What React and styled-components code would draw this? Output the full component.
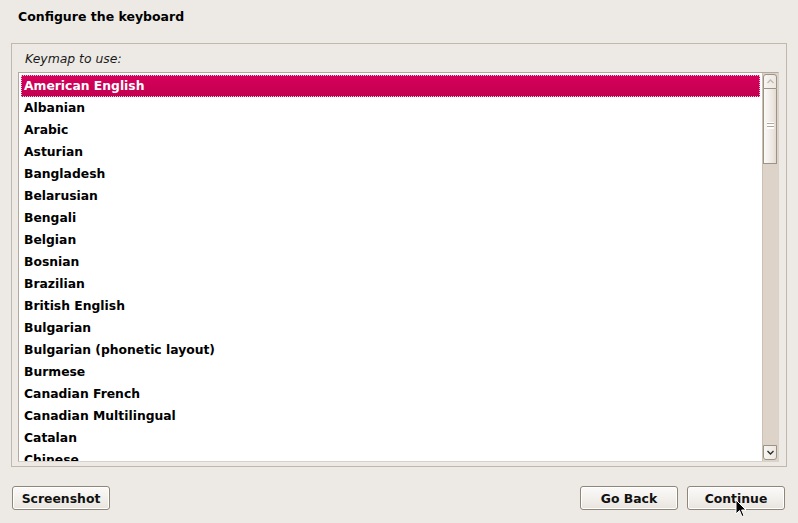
import React from 'react';
import styled, { createGlobalStyle } from 'styled-components';

const GlobalStyle = createGlobalStyle`
  html, body {
    margin: 0;
    padding: 0;
    background: #edeae5;
  }
  body {
    font-family: "DejaVu Sans", "Liberation Sans", sans-serif;
    color: #000;
  }
`;

const keymaps = [
  'American English',
  'Albanian',
  'Arabic',
  'Asturian',
  'Bangladesh',
  'Belarusian',
  'Bengali',
  'Belgian',
  'Bosnian',
  'Brazilian',
  'British English',
  'Bulgarian',
  'Bulgarian (phonetic layout)',
  'Burmese',
  'Canadian French',
  'Canadian Multilingual',
  'Catalan',
  'Chinese',
];

const Page = styled.div`
  position: relative;
  width: 798px;
  height: 523px;
  display: flex;
  flex-direction: column;
  background: #edeae5;
  overflow: hidden;
`;

const Header = styled.div`
  height: 43px;
  padding: 9px 0 0 18px;
  box-sizing: border-box;
  font-size: 12.5px;
  font-weight: bold;
`;

const Frame = styled.div`
  margin: 0 11px 0 11px;
  height: 424px;
  box-sizing: border-box;
  border: 1px solid #c0b8ab;
  padding: 4px 7px 4px 6px;
  display: flex;
  flex-direction: column;
`;

const Label = styled.div`
  font-size: 12.4px;
  font-style: italic;
  color: #1a1a1a;
  height: 24px;
  padding: 3px 0 0 7px;
  box-sizing: border-box;
`;

const ListBox = styled.div`
  flex: 1;
  display: flex;
  border: 1px solid #b2aa9e;
  border-right-color: #d8d2c9;
  border-bottom-color: #d8d2c9;
  background: #fff;
  overflow: hidden;
`;

const Rows = styled.div`
  flex: 1;
  padding: 2px 2px 0 2px;
  overflow: hidden;
`;

const Row = styled.div`
  height: 22px;
  line-height: 22px;
  padding-left: 3px;
  font-size: 12.35px;
  font-weight: bold;
  white-space: nowrap;
  box-sizing: border-box;
  color: ${p => (p.$selected ? '#fff' : '#000')};
  background: ${p => (p.$selected ? 'linear-gradient(#d7005b, #c10050)' : 'transparent')};
  outline: ${p => (p.$selected ? '1px dotted #f6c4d8' : 'none')};
  outline-offset: -1px;
`;

const ScrollBar = styled.div`
  width: 16px;
  background: #ddd3c8;
  border-left: 1px solid #c9c1b6;
  display: flex;
  flex-direction: column;
  padding: 1px 0;
  box-sizing: border-box;
`;

const Stepper = styled.div`
  height: 15px;
  margin: 0 1px 0 0;
  border: 1px solid #9d9385;
  border-radius: ${p => (p.$up ? '3px 3px 0 0' : '0 0 3px 3px')};
  background: linear-gradient(90deg, #f7f5f2, #ece7e2);
  display: flex;
  align-items: center;
  justify-content: center;
  box-sizing: border-box;
`;

const Thumb = styled.div`
  height: 75px;
  margin-right: 1px;
  border: 1px solid #9d9385;
  border-top: none;
  background: linear-gradient(90deg, #fbfaf9, #ede7e2 70%, #e3dbd3);
  display: flex;
  align-items: center;
  justify-content: center;
  box-sizing: border-box;
`;

const Grip = styled.div`
  width: 7px;
  height: 7px;
  margin-top: -2px;
  background: repeating-linear-gradient(#ffffff 0 1px, #b3a897 1px 2px, #ffffff 2px 3px);
`;

const Trough = styled.div`
  flex: 1;
`;

const Footer = styled.div`
  flex: 1;
  display: flex;
  align-items: flex-start;
  padding: 19px 13px 0 12px;
  gap: 9px;
`;

const Spacer = styled.div`
  flex: 1;
`;

const Button = styled.button`
  width: 98px;
  height: 24px;
  padding: 0;
  border: 1px solid #8f8677;
  border-radius: 3px;
  background: linear-gradient(#fbfaf9, #f1eeea 60%, #e8e3de);
  box-shadow: inset 0 0 0 1px #ffffff;
  font-family: "DejaVu Sans", "Liberation Sans", sans-serif;
  font-size: 12.4px;
  font-weight: bold;
  color: #111;
`;

const Pointer = styled.svg`
  position: absolute;
  left: 735px;
  top: 499px;
`;

const Arrow = ({ up }) => (
  <svg width="7" height="5" viewBox="0 0 7 5">
    <path
      d={up ? 'M0.5 4 L3.5 1 L6.5 4' : 'M0.5 1 L3.5 4 L6.5 1'}
      fill="none"
      stroke={up ? '#c2b9ad' : '#2a2a2a'}
      strokeWidth="1.3"
    />
  </svg>
);

const App = () => (
  <>
    <GlobalStyle />
    <Page>
      <Header>Configure the keyboard</Header>
      <Frame>
        <Label>Keymap to use:</Label>
        <ListBox>
          <Rows>
            {keymaps.map((k, i) => (
              <Row key={k} $selected={i === 0}>
                {k}
              </Row>
            ))}
          </Rows>
          <ScrollBar>
            <Stepper $up>
              <Arrow up />
            </Stepper>
            <Thumb>
              <Grip />
            </Thumb>
            <Trough />
            <Stepper>
              <Arrow />
            </Stepper>
          </ScrollBar>
        </ListBox>
      </Frame>
      <Footer>
        <Button>Screenshot</Button>
        <Spacer />
        <Button>Go Back</Button>
        <Button>Continue</Button>
      </Footer>
      <Pointer width="12" height="19" viewBox="0 0 12 19">
        <path d="M1 1 L1 15 L4.5 11.5 L7 17.5 L9 16.6 L6.6 11 L11 11 Z" fill="#000" stroke="#fff" strokeWidth="1" />
      </Pointer>
    </Page>
  </>
);

export default App;
